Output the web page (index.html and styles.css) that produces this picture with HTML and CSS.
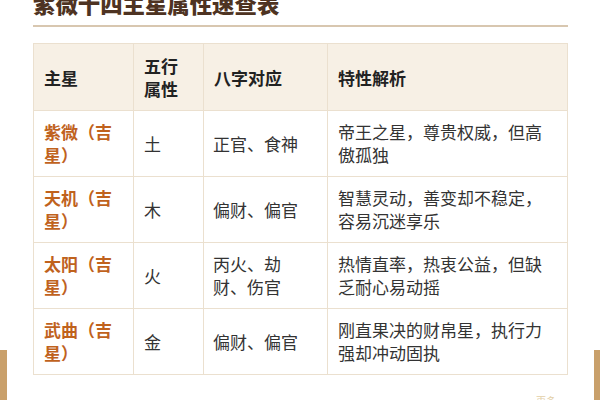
FILE: index.html
```html
<!DOCTYPE html>
<html lang="zh-CN">
<head>
<meta charset="utf-8">
<link rel="stylesheet" href="styles.css">
</head>
<body>
<div class="page">
  <div class="side side-left"></div>
  <main class="content">
    <h2 class="title">紫微十四主星属性速查表</h2>
    <table class="stars">
      <colgroup>
        <col class="c1"><col class="c2"><col class="c3"><col class="c4">
      </colgroup>
      <thead>
        <tr><th>主星</th><th>五行属性</th><th>八字对应</th><th>特性解析</th></tr>
      </thead>
      <tbody>
        <tr><td class="star">紫微（吉星）</td><td>土</td><td>正官、食神</td><td>帝王之星，尊贵权威，但高傲孤独</td></tr>
        <tr><td class="star">天机（吉星）</td><td>木</td><td>偏财、偏官</td><td>智慧灵动，善变却不稳定，容易沉迷享乐</td></tr>
        <tr><td class="star">太阳（吉星）</td><td>火</td><td>丙火、劫财、伤官</td><td>热情直率，热衷公益，但缺乏耐心易动摇</td></tr>
        <tr><td class="star">武曲（吉星）</td><td>金</td><td>偏财、偏官</td><td>刚直果决的财帛星，执行力强却冲动固执</td></tr>
      </tbody>
    </table>
    <div class="note">更多</div>
  </main>
  <div class="side side-right"></div>
</div>
</body>
</html>
```

FILE: styles.css
```css
html, body {
  margin: 0;
  padding: 0;
  background: #ffffff;
}
body {
  font-family: "Noto Sans CJK SC", "Noto Sans", sans-serif;
  color: #333333;
  width: 600px;
  height: 400px;
  overflow: hidden;
}
.page {
  display: flex;
  width: 600px;
  height: 400px;
}
.side {
  width: 7px;
  flex: none;
  align-self: flex-end;
  height: 50px;
  background: #c9a06b;
}
.content {
  flex: 1;
  padding: 0 26px;
  position: relative;
}
.title {
  margin: -12px 0 0 0;
  font-size: 22.4px;
  line-height: 30px;
  font-weight: 900;
  color: #4e3322;
  padding-bottom: 7px;
  border-bottom: 2px solid #d8c7b0;
  letter-spacing: 0;
}
.stars {
  margin-top: 16px;
  border-collapse: collapse;
  table-layout: fixed;
  width: 534px;
  font-size: 17px;
  line-height: 23px;
}
.c1 { width: 100px; }
.c2 { width: 70px; }
.c3 { width: 124px; }
.c4 { width: 240px; }
.stars th, .stars td {
  border: 1px solid #ebe0cf;
  padding: 10px;
  text-align: left;
  vertical-align: middle;
}
.stars td:nth-child(3) { padding-left: 9px; padding-right: 18px; }
.stars th {
  background: #f7f0e5;
  font-weight: 700;
  color: #222222;
  height: 46px;
}
.stars td {
  height: 43px;
  padding-top: 9px;
  padding-bottom: 10px;
  color: #333333;
}
.stars td.star {
  color: #c0621d;
  font-weight: 700;
}
.note {
  position: absolute;
  right: 38px;
  bottom: -8px;
  font-size: 10px;
  color: #e3cfa8;
}
```
